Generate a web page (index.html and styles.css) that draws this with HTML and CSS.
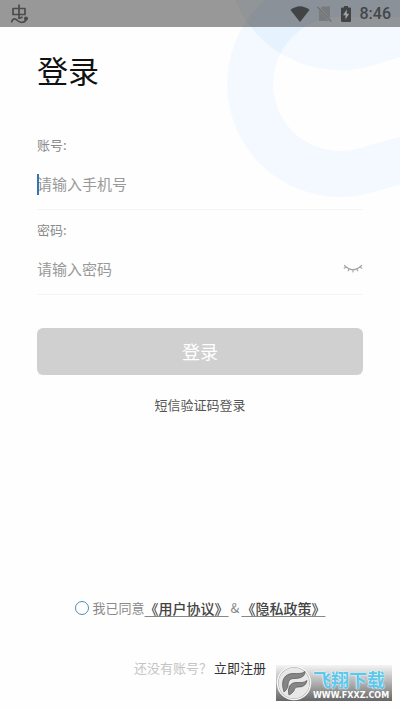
FILE: index.html
```html
<!DOCTYPE html>
<html lang="zh-CN">
<head>
<meta charset="utf-8">
<meta name="viewport" content="width=device-width, initial-scale=1">
<title>登录</title>
<link rel="stylesheet" href="styles.css">
</head>
<body>
<div class="screen">
  <svg class="backdrop" width="180" height="200" viewBox="220 0 180 200" aria-hidden="true">
    <clipPath id="upper"><path d="M420 0V51L371 66A114 114 0 0 1 235 0Z"/></clipPath>
    <path d="M420 0V51L371 66A114 114 0 0 1 235 0Z" fill="#f3f9fe"/>
    <path d="M420 -6H340A90 90 0 1 0 365 170.500L420 155" fill="none" stroke="#f3f9fe" stroke-width="46"/>
    <path d="M420 -6H340A90 90 0 1 0 365 170.500L420 155" fill="none" stroke="#e6f2fd" stroke-width="46" clip-path="url(#upper)"/>
  </svg>

  <header class="status">
    <svg class="status-app" width="18" height="20" viewBox="0 0 18 20" fill="none" stroke="#4b4b4b" stroke-width="1.700" aria-hidden="true">
      <path d="M2 4.500H14V10.500H2ZM8 0.500V15M0.500 18.500C1 14.500 4 14 6.500 16.500C9 19 14.500 19.500 15.500 14M8 14.500L11.500 13" stroke-linejoin="round"/>
      <circle cx="15" cy="14.500" r="1.200" fill="#4b4b4b"/>
    </svg>
    <div class="status-right">
      <svg width="20" height="16" viewBox="0 0 20 16" aria-hidden="true"><path d="M10 16L0.500 4Q10 -3.500 19.500 4Z" fill="#414345"/></svg>
      <svg class="sim" width="15" height="16" viewBox="0 0 15 16" aria-hidden="true"><path d="M5.500 0.500H13V12.500L3.800 2.200ZM2 4L12 15H2Z" fill="#787b7e"/><path d="M0.500 1L14.300 15.500" stroke="#6f7275" stroke-width="1.400"/></svg>
      <svg class="battery" width="10" height="16" viewBox="0 0 10 16" aria-hidden="true"><path d="M3 0H7V1.500H9Q10 1.500 10 2.500V15Q10 16 9 16H1Q0 16 0 15V2.500Q0 1.500 1 1.500H3Z" fill="#414345"/><path d="M5.800 3.500L2 9.300H4.500V13.500L8.200 7.800H5.800Z" fill="#a0a3a6"/></svg>
      <span class="time">8:46</span>
    </div>
  </header>

  <main class="content">
    <h1 class="title">登录</h1>
    <form class="form">
      <div class="field">
        <label class="label" for="account">账号:</label>
        <div class="control">
          <input class="input" id="account" type="tel" placeholder="请输入手机号">
          <span class="caret"></span>
        </div>
      </div>
      <div class="field">
        <label class="label" for="password">密码:</label>
        <div class="control">
          <input class="input" id="password" type="password" placeholder="请输入密码">
          <button class="eye" type="button" aria-label="显示密码">
            <svg width="20" height="10" viewBox="0 0 20 10" fill="none" stroke="#a6a6a6" stroke-width="1.200" stroke-linecap="round" aria-hidden="true"><path d="M1.500 1.500Q10 10 18.500 1.500M3 3L1.200 4.200M6.200 5L5.200 6.800M10 5.800V8M13.800 5L14.800 6.800M17 3L18.800 4.200"/></svg>
          </button>
        </div>
      </div>
      <button class="submit" type="button">登录</button>
    </form>
    <a class="sms" href="#sms">短信验证码登录</a>

    <div class="agree">
      <input class="radio" id="agree" type="radio">
      <label for="agree">我已同意</label><a class="policy" href="#terms">《用户协议》</a><span class="and">&amp;</span><a class="policy" href="#privacy">《隐私政策》</a>
    </div>
    <p class="signup">还没有账号？<a class="register" href="#register">立即注册</a></p>
  </main>

  <aside class="watermark">
    <svg class="watermark-logo" width="36" height="36" viewBox="0 0 36 36" aria-hidden="true">
      <circle cx="18" cy="18" r="16.500" fill="#8d8d8d" stroke="#f4f4f4" stroke-width="1.500"/>
      <circle cx="18" cy="18" r="15.500" fill="#e8e8e8"/>
      <path d="M8 27C4 15 9 8.500 17 8.500C22 8.500 26 9 29 6.500C29 12 24 13.500 18 13.500C13 13.500 12 17 12 21Q11 25 8 27Z" fill="#858585" stroke="#555" stroke-width=".7"/>
      <path d="M13 30C11 22 15 17.500 20 17.500C25 17.500 28 18 31 15.500C30 21 26 22 22 22C18 22 19 25 17 27Q15 29 13 30Z" fill="#858585" stroke="#555" stroke-width=".7"/>
    </svg>
    <div class="watermark-text">
      <span class="watermark-name">飞翔下载</span>
      <span class="watermark-url">WWW.FXXZ.COM</span>
    </div>
  </aside>
</div>
</body>
</html>
```
FILE: styles.css
```css
* {
  box-sizing: border-box;
}

body {
  margin: 0;
  background: #fefefe;
  font-family: "Noto Sans CJK SC", sans-serif;
  font-size: 13px;
  line-height: 20px;
  color: #8a8a8a;
}

a {
  color: inherit;
  text-decoration: none;
}

.screen {
  position: relative;
  display: flex;
  flex-direction: column;
  min-height: 100vh;
  overflow: hidden;
}

.backdrop {
  position: absolute;
  top: 0;
  right: 0;
}

.status {
  position: relative;
  display: flex;
  align-items: center;
  justify-content: space-between;
  height: 27px;
  padding: 0 9px 0 11px;
  background: rgba(0, 0, 0, 0.4);
}

.status-right {
  display: flex;
  align-items: center;
}

.sim {
  margin-left: 7px;
}

.battery {
  margin: 0 9px;
}

.time {
  font: 500 16px/20px Roboto, sans-serif;
  color: #454749;
}

.content {
  position: relative;
  display: flex;
  flex: 1;
  flex-direction: column;
  padding: 23px 37px 32px;
}

.title {
  margin: 0 0 45px;
  font-size: 31px;
  font-weight: 400;
  line-height: 40px;
  color: #111;
}

.field {
  height: 85px;
}

.label {
  display: block;
}

.control {
  position: relative;
  display: flex;
  align-items: center;
  height: 55px;
  padding-top: 4px;
  border-bottom: 1px solid #f5f5f5;
}

.input {
  flex: 1;
  min-width: 0;
  padding: 0;
  border: 0;
  outline: 0;
  background: transparent;
  font: inherit;
  font-size: 15px;
  line-height: 24px;
  color: #333;
}

.input::placeholder {
  color: #999;
  opacity: 1;
}

.caret {
  position: absolute;
  left: 0;
  width: 2px;
  height: 21px;
  background: #3275b5;
}

.eye {
  display: flex;
  padding: 0;
  border: 0;
  background: transparent;
}

.submit {
  display: block;
  width: 100%;
  height: 47px;
  margin-top: 23px;
  padding: 0 0 2px;
  border: 0;
  border-radius: 6px;
  background: #d0d0d0;
  font: inherit;
  font-size: 18px;
  color: #fff;
}

.sms {
  align-self: center;
  margin-top: 20px;
  color: #555;
}

.agree {
  display: flex;
  align-items: center;
  justify-content: center;
  margin-top: auto;
  white-space: nowrap;
}

.radio {
  appearance: none;
  width: 14px;
  height: 14px;
  margin: 0 4px 0 0;
  border: 1px solid #4a8fb8;
  border-radius: 50%;
}

.policy {
  font-size: 14px;
  font-weight: 500;
  color: #444;
  text-decoration: underline #888;
  text-underline-offset: 2px;
}

.and {
  padding: 0 2px;
}

.signup {
  margin: 40px 0 0;
  text-align: center;
  color: #c4c4c4;
}

.register {
  margin-left: 2px;
  color: #333;
}

.watermark {
  position: absolute;
  right: 8px;
  bottom: 9px;
  display: flex;
  width: 116px;
  height: 36px;
  background: linear-gradient(#f4f4f4, #b0b0b0 50%, #666);
}

.watermark-text {
  display: flex;
  flex-direction: column;
  padding: 1px 0 0 1px;
}

.watermark-name {
  font-size: 18px;
  font-weight: 700;
  line-height: 26px;
  color: #5bc8ec;
  text-shadow: 0 0 1px #fff, 0 0 2px #fff;
}

.watermark-url {
  font: 700 8px/8px "DejaVu Sans", sans-serif;
  color: #fff;
}
```
